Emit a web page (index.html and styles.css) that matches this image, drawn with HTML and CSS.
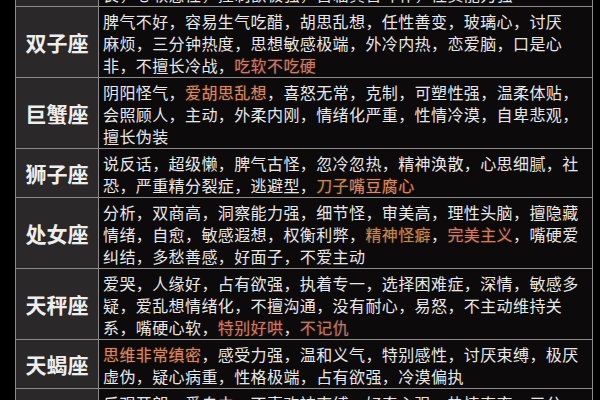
FILE: index.html
```
<!DOCTYPE html>
<html lang="zh-CN">
<head>
<meta charset="utf-8">
<link rel="stylesheet" href="styles.css">
</head>
<body>
<div class="table">
  <div class="row">
    <div class="sign">金牛座</div>
    <div class="desc">
      <div class="ln">固执，慢热，占有欲强，物质，务实稳重，有耐心，贪吃</div>
      <div class="ln">懒惰，念旧，恋家，审美高，保守谨慎，死心眼，重感情</div>
      <div class="ln">良，心软感性，控制欲极强，首临真善斗补，性资能力强</div>
    </div>
  </div>
  <div class="row">
    <div class="sign">双子座</div>
    <div class="desc">
      <div class="ln">脾气不好，容易生气吃醋，胡思乱想，任性善变，玻璃心，讨厌</div>
      <div class="ln">麻烦，三分钟热度，思想敏感极端，外冷内热，恋爱脑，口是心</div>
      <div class="ln">非，不擅长冷战，<span class="hl red">吃软不吃硬</span></div>
    </div>
  </div>
  <div class="row">
    <div class="sign">巨蟹座</div>
    <div class="desc">
      <div class="ln">阴阳怪气，<span class="hl orange">爱胡思乱想</span>，喜怒无常，克制，可塑性强，温柔体贴，</div>
      <div class="ln">会照顾人，主动，外柔内刚，情绪化严重，性情冷漠，自卑悲观，</div>
      <div class="ln">擅长伪装</div>
    </div>
  </div>
  <div class="row">
    <div class="sign">狮子座</div>
    <div class="desc">
      <div class="ln">说反话，超级懒，脾气古怪，忽冷忽热，精神涣散，心思细腻，社</div>
      <div class="ln">恐，严重精分裂症，逃避型，<span class="hl gold">刀子</span><span class="hl orange">嘴豆腐心</span></div>
    </div>
  </div>
  <div class="row">
    <div class="sign">处女座</div>
    <div class="desc">
      <div class="ln">分析，双商高，洞察能力强，细节怪，审美高，理性头脑，擅隐藏</div>
      <div class="ln">情绪，自愈，敏感遐想，权衡利弊，<span class="hl gold">精神怪癖</span>，<span class="hl red">完美主义</span>，嘴硬爱</div>
      <div class="ln">纠结，多愁善感，好面子，不爱主动</div>
    </div>
  </div>
  <div class="row">
    <div class="sign">天秤座</div>
    <div class="desc">
      <div class="ln">爱哭，人缘好，占有欲强，执着专一，选择困难症，深情，敏感多</div>
      <div class="ln">疑，爱乱想情绪化，不擅沟通，没有耐心，易怒，不主动维持关</div>
      <div class="ln">系，嘴硬心软，<span class="hl red">特别好哄</span>，<span class="hl dim">不记仇</span></div>
    </div>
  </div>
  <div class="row">
    <div class="sign">天蝎座</div>
    <div class="desc">
      <div class="ln"><span class="hl orange">思维非常缜密</span>，感受力强，温和义气，特别感性，讨厌束缚，极厌</div>
      <div class="ln">虚伪，疑心病重，性格极端，占有欲强，冷漠偏执</div>
    </div>
  </div>
  <div class="row">
    <div class="sign">射手座</div>
    <div class="desc">
      <div class="ln">乐观开朗，爱自由，不喜欢被束缚，好奇心强，热情直率，三分</div>
      <div class="ln">钟热度，粗心大意，爱冒险</div>
    </div>
  </div>
</div>
</body>
</html>
```
FILE: styles.css
```
html, body {
  margin: 0;
  padding: 0;
  background: #000;
}
body {
  width: 600px;
  height: 400px;
  overflow: hidden;
  font-family: "Noto Sans CJK SC", "Noto Sans", sans-serif;
}
.table {
  margin: -64px 0 0 15px;
  width: 578px;
  border-left: 1px solid #8c8a8a;
  border-right: 1px solid #8c8a8a;
  box-sizing: border-box;
}
.row {
  display: grid;
  grid-template-columns: 83px 1fr;
  border-bottom: 1px solid #8c8a8a;
}
.sign {
  background: #2a2828;
  color: #eeeeee;
  font-size: 21px;
  font-weight: 700;
  display: flex;
  align-items: center;
  justify-content: center;
  border-right: 1px solid #8c8a8a;
}
.desc {
  background: #0c0a0a;
  color: #e8e8e8;
  font-size: 16px;
  line-height: 22px;
  letter-spacing: 0.4px;
  padding: 3px 0 1px 4px;
  white-space: nowrap;
}
.hl { text-shadow: 0 0 2px rgba(200, 90, 50, 0.5); }
.red { color: #cc7a6a; }
.orange { color: #d68a68; }
.gold { color: #c08a52; }
.dim { color: #b87a74; }
```
